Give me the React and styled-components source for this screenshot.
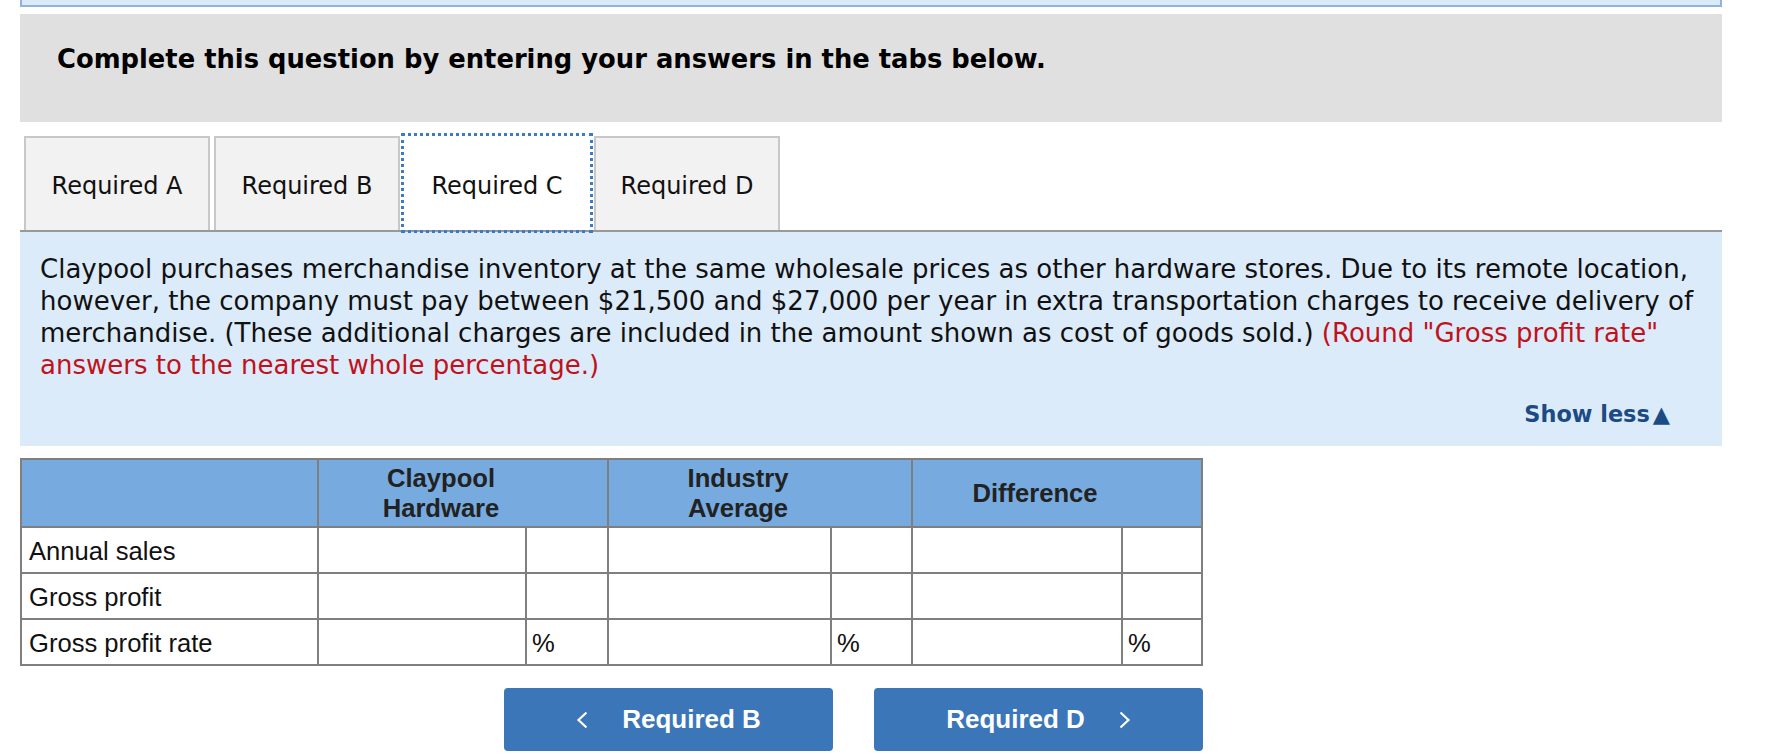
import React, { useState } from "react";
import styled, { createGlobalStyle, css } from "styled-components";

const GlobalStyle = createGlobalStyle`
  body {
    margin: 0;
    background: #ffffff;
    font-family: "DejaVu Sans", Verdana, sans-serif;
    color: #111111;
  }
`;

const tabs = ["Required A", "Required B", "Required C", "Required D"];

const rows = [
  { label: "Annual sales", unit: "" },
  { label: "Gross profit", unit: "" },
  { label: "Gross profit rate", unit: "%" },
];

const Chevron = ({ dir }) => (
  <svg width="12" height="18" viewBox="0 0 12 18" fill="none">
    <path
      d={dir === "left" ? "M10.5 1.5 L2.5 9 L10.5 16.5" : "M1.5 1.5 L9.5 9 L1.5 16.5"}
      stroke="#ffffff"
      strokeWidth="2.2"
    />
  </svg>
);

const App = () => {
  const [active, setActive] = useState(2);

  return (
    <Page>
      <GlobalStyle />
      <TopStrip />
      <Instructions>
        <h2>Complete this question by entering your answers in the tabs below.</h2>
      </Instructions>

      <TabBar>
        {tabs.map((t, i) => (
          <Tab key={t} $active={i === active} onClick={() => setActive(i)}>
            {t}
          </Tab>
        ))}
      </TabBar>

      <Panel>
        <Question>
          Claypool purchases merchandise inventory at the same wholesale prices as other
          hardware stores. Due to its remote location, however, the company must pay between
          $21,500 and $27,000 per year in extra transportation charges to receive delivery of
          merchandise. (These additional charges are included in the amount shown as cost of
          goods sold.) <Note>(Round "Gross profit rate" answers to the nearest whole percentage.)</Note>
        </Question>
        <ShowLess>
          Show less<Arrow>▲</Arrow>
        </ShowLess>
      </Panel>

      <Grid>
        <colgroup>
          <col style={{ width: 297 }} />
          <col style={{ width: 208 }} />
          <col style={{ width: 82 }} />
          <col style={{ width: 223 }} />
          <col style={{ width: 81 }} />
          <col style={{ width: 210 }} />
          <col style={{ width: 80 }} />
        </colgroup>
        <thead>
          <tr>
            <Head />
            <Head colSpan={2}>
              Claypool
              <br />
              Hardware
            </Head>
            <Head colSpan={2}>
              Industry
              <br />
              Average
            </Head>
            <Head colSpan={2}>Difference</Head>
          </tr>
        </thead>
        <tbody>
          {rows.map((r) => (
            <tr key={r.label}>
              <Cell>{r.label}</Cell>
              <Cell />
              <Cell $unit>{r.unit}</Cell>
              <Cell />
              <Cell $unit>{r.unit}</Cell>
              <Cell />
              <Cell $unit>{r.unit}</Cell>
            </tr>
          ))}
        </tbody>
      </Grid>

      <NavRow>
        <NavButton onClick={() => setActive(1)}>
          <Chevron dir="left" />
          <span>Required B</span>
        </NavButton>
        <NavButton onClick={() => setActive(3)}>
          <span>Required D</span>
          <Chevron dir="right" />
        </NavButton>
      </NavRow>
    </Page>
  );
};

export default App;

const Page = styled.div`
  width: 1702px;
  padding-left: 20px;
`;

const TopStrip = styled.div`
  height: 5px;
  background: #dbeaf8;
  border: 2px solid #8fb3dd;
  border-top: none;
`;

const Instructions = styled.div`
  margin-top: 7px;
  height: 108px;
  box-sizing: border-box;
  background: #e0e0e0;
  padding: 30px 37px 0;

  h2 {
    margin: 0;
    font-size: 25.8px;
    font-weight: bold;
    color: #000000;
    line-height: normal;
  }
`;

const TabBar = styled.div`
  margin-top: 14px;
  display: flex;
  gap: 4px;
  padding-left: 4px;
  border-bottom: 2px solid #999999;
`;

const Tab = styled.div`
  width: 186px;
  height: 94px;
  box-sizing: border-box;
  display: flex;
  align-items: center;
  justify-content: center;
  padding-top: 4px;
  border: 2px solid #c8c8c8;
  border-bottom: none;
  background: #f2f2f2;
  font-size: 24px;
  color: #111111;
  cursor: pointer;

  ${(p) =>
    p.$active &&
    css`
      background: #ffffff;
      border-color: #ffffff;
      outline: 3px dotted #3b7bc6;
    `}
`;

const Panel = styled.div`
  background: #dbebf9;
  padding: 21px 10px 19px 20px;
`;

const Question = styled.p`
  margin: 0;
  font-size: 26px;
  line-height: 32px;
  color: #111111;
`;

const Note = styled.span`
  color: #c1121c;
`;

const ShowLess = styled.div`
  margin-top: 20px;
  padding-right: 42px;
  text-align: right;
  font-size: 22.4px;
  font-weight: bold;
  color: #1b4a85;
  cursor: pointer;
`;

const Arrow = styled.span`
  margin-left: 3px;
`;

const Grid = styled.table`
  margin-top: 12px;
  width: 1181px;
  border-collapse: collapse;
  table-layout: fixed;
  font-family: "Liberation Sans", Arial, sans-serif;
  font-size: 25.6px;
`;

const Head = styled.th`
  background: #77abe0;
  border: 2px solid #7f7f7f;
  color: #222222;
  font-weight: bold;
  line-height: 30px;
  padding: 3px 48px 3px 4px;
  text-align: center;
  vertical-align: middle;
`;

const Cell = styled.td`
  height: 46px;
  box-sizing: border-box;
  border: 2px solid #7f7f7f;
  padding: 2px ${(p) => (p.$unit ? "5px" : "7px")} 0;
  color: #111111;
  text-align: left;
  vertical-align: middle;
  background: #ffffff;
`;

const NavRow = styled.div`
  display: flex;
  gap: 41px;
  margin-top: 22px;
  padding-left: 484px;
`;

const NavButton = styled.button`
  width: 329px;
  height: 63px;
  display: flex;
  align-items: center;
  justify-content: center;
  gap: 34px;
  border: none;
  border-radius: 4px;
  background: #3a76b8;
  color: #ffffff;
  font-family: "Liberation Sans", Arial, sans-serif;
  font-size: 26px;
  font-weight: bold;
  cursor: pointer;
`;
